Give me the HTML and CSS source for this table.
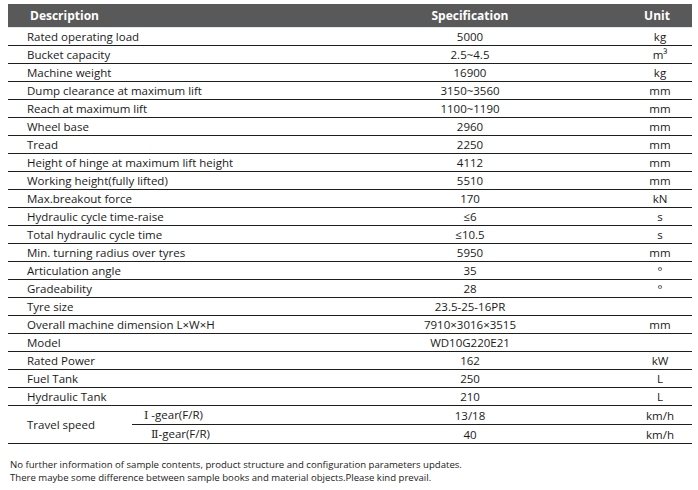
FILE: index.html
```html
<!DOCTYPE html>
<html>
<head>
<meta charset="utf-8">
<link rel="stylesheet" href="styles.css">
</head>
<body>
<table class="spec">
  <colgroup>
    <col class="c-a"><col class="c-b"><col class="c-spec"><col class="c-unit">
  </colgroup>
  <thead>
    <tr><th colspan="2" class="desc">Description</th><th class="val">Specification</th><th class="unit">Unit</th></tr>
  </thead>
  <tbody>
    <tr><td colspan="2">Rated operating load</td><td class="val">5000</td><td class="unit">kg</td></tr>
    <tr><td colspan="2">Bucket capacity</td><td class="val">2.5~4.5</td><td class="unit">m³</td></tr>
    <tr><td colspan="2">Machine weight</td><td class="val">16900</td><td class="unit">kg</td></tr>
    <tr><td colspan="2">Dump clearance at maximum lift</td><td class="val">3150~3560</td><td class="unit">mm</td></tr>
    <tr><td colspan="2">Reach at maximum lift</td><td class="val">1100~1190</td><td class="unit">mm</td></tr>
    <tr><td colspan="2">Wheel base</td><td class="val">2960</td><td class="unit">mm</td></tr>
    <tr><td colspan="2">Tread</td><td class="val">2250</td><td class="unit">mm</td></tr>
    <tr><td colspan="2">Height of hinge at maximum lift height</td><td class="val">4112</td><td class="unit">mm</td></tr>
    <tr><td colspan="2">Working height(fully lifted)</td><td class="val">5510</td><td class="unit">mm</td></tr>
    <tr><td colspan="2">Max.breakout force</td><td class="val">170</td><td class="unit">kN</td></tr>
    <tr><td colspan="2">Hydraulic cycle time-raise</td><td class="val">≤6</td><td class="unit">s</td></tr>
    <tr><td colspan="2">Total hydraulic cycle time</td><td class="val">≤10.5</td><td class="unit">s</td></tr>
    <tr><td colspan="2">Min. turning radius over tyres</td><td class="val">5950</td><td class="unit">mm</td></tr>
    <tr><td colspan="2">Articulation angle</td><td class="val">35</td><td class="unit">°</td></tr>
    <tr><td colspan="2">Gradeability</td><td class="val">28</td><td class="unit">°</td></tr>
    <tr><td colspan="2">Tyre size</td><td class="val">23.5-25-16PR</td><td class="unit"></td></tr>
    <tr><td colspan="2">Overall machine dimension L×W×H</td><td class="val">7910×3016×3515</td><td class="unit">mm</td></tr>
    <tr><td colspan="2">Model</td><td class="val">WD10G220E21</td><td class="unit"></td></tr>
    <tr><td colspan="2">Rated Power</td><td class="val">162</td><td class="unit">kW</td></tr>
    <tr><td colspan="2">Fuel Tank</td><td class="val">250</td><td class="unit">L</td></tr>
    <tr><td colspan="2">Hydraulic Tank</td><td class="val">210</td><td class="unit">L</td></tr>
    <tr><td rowspan="2" class="span">Travel speed</td><td class="sub"><span class="roman">Ⅰ</span> -gear(F/R)</td><td class="val">13/18</td><td class="unit">km/h</td></tr>
    <tr><td class="sub"><span class="roman">Ⅱ</span>-gear(F/R)</td><td class="val">40</td><td class="unit">km/h</td></tr>
  </tbody>
</table>
<div class="notes">
  <p>No further information of sample contents, product structure and configuration parameters updates.</p>
  <p>There maybe some difference between sample books and material objects.Please kind prevail.</p>
</div>
</body>
</html>
```
FILE: styles.css
```css
html, body {
  margin: 0;
  padding: 0;
  background: #fff;
}
body {
  padding: 4px 6px 0 8px;
  font-family: "Open Sans", "Noto Sans", sans-serif;
  color: #1a1a1a;
}
.spec {
  border-collapse: collapse;
  width: 684px;
  table-layout: fixed;
  font-size: 11.5px;
}
.c-a { width: 124px; }
.c-b { width: 168px; }
.c-spec { width: 340px; }
.c-unit { width: 52px; }
.spec th {
  background: #595959;
  color: #fff;
  font-weight: 700;
  font-size: 12px;
  height: 23px;
  padding: 0;
  border-bottom: 1px solid #dfe8ef;
}
.spec th.desc { text-align: left; padding-left: 22px; }
.spec td {
  height: 17px;
  padding: 0;
  border-bottom: 1px solid #1e1e1e;
  line-height: 17px;
  white-space: nowrap;
}
.spec tbody td:first-child { padding-left: 19px; }
.spec td.sub { padding-left: 12px; }
.roman { font-family: "DejaVu Serif", "Liberation Serif", serif; font-size: 11px; }
.val { text-align: center; }
.unit { text-align: center; padding-right: 12px !important; }
.spec th.unit { padding-right: 18px !important; }
.notes {
  margin-top: 15px;
  padding-left: 2px;
  font-size: 9.6px;
  line-height: 12.5px;
  color: #222;
}
.notes p { margin: 0; }
```
